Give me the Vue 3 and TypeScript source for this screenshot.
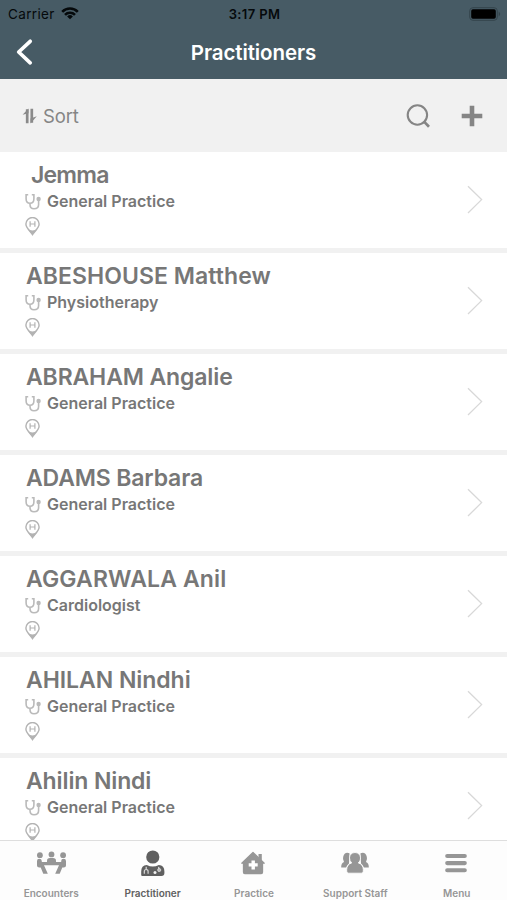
<script setup lang="ts">
interface Practitioner {
  name: string
  specialty: string
  tracking: number
}

const practitioners: Practitioner[] = [
  { name: ' Jemma', specialty: 'General Practice', tracking: -0.8 },
  { name: 'ABESHOUSE Matthew', specialty: 'Physiotherapy', tracking: 0.06 },
  { name: 'ABRAHAM Angalie', specialty: 'General Practice', tracking: -0.13 },
  { name: 'ADAMS Barbara', specialty: 'General Practice', tracking: -0.15 },
  { name: 'AGGARWALA Anil', specialty: 'Cardiologist', tracking: 0.14 },
  { name: 'AHILAN Nindhi', specialty: 'General Practice', tracking: -0.05 },
  { name: 'Ahilin Nindi', specialty: 'General Practice', tracking: -0.12 },
]

const tabs: string[] = ['Encounters', 'Practitioner', 'Practice', 'Support Staff', 'Menu']
const activeTab = 'Practitioner'
</script>

<template>
  <div class="screen">
    <header class="header">
      <div class="status">
        <div class="carrier">
          <span>Carrier</span>
          <svg width="18" height="13" viewBox="0 0 18 13" fill="none" stroke="#05090b" stroke-width="2.6">
            <path d="M1.2 4.8a11 11 0 0 1 15.6 0M4 7.8a7 7 0 0 1 10 0" />
            <path d="M9 12.2 6.1 9.400a4.100 4.100 0 0 1 5.800 0z" fill="#05090b" stroke="none" />
          </svg>
        </div>
        <span class="clock">3:17 PM</span>
        <svg class="battery" width="32" height="14" viewBox="0 0 32 14">
          <rect x="0.7" y="0.7" width="27.6" height="12.6" rx="3.2" fill="none" stroke="#34444c" stroke-width="1" />
          <rect x="2.2" y="2.2" width="24.6" height="9.6" rx="1.7" fill="#000" />
          <path d="M29.7 4.6q3 2.4 0 4.8z" fill="#34444c" />
        </svg>
      </div>
      <div class="nav">
        <svg class="back" width="20" height="30" viewBox="0 0 20 30" fill="none" stroke="#fff" stroke-width="3.7" stroke-linecap="round" stroke-linejoin="round">
          <path d="M15.2 4.3 3.700 15l11.500 10.800" />
        </svg>
        <h1>Practitioners</h1>
        <span class="balance"></span>
      </div>
    </header>

    <div class="toolbar">
      <div class="sort">
        <svg width="16" height="16" viewBox="0 0 16 16" fill="none" stroke="#8a8a8a" stroke-width="2.7">
          <path d="M5.200 15.200V1.200M9.800.8v14" />
          <path d="M6.500.5v4.800L.6 6.700z M8.500 15.500v-5l6.300-2.200z" fill="#8a8a8a" stroke="none" />
        </svg>
        <span>Sort</span>
      </div>
      <div class="tools">
        <svg width="26" height="26" viewBox="0 0 26 26" fill="none" stroke="#858585" stroke-width="2.1">
          <circle cx="12.4" cy="12" r="9.700" />
          <path d="m18.800 18.400 5.200 5.300" stroke-width="2.700" />
        </svg>
        <svg width="22" height="22" viewBox="0 0 22 22" fill="none" stroke="#858585" stroke-width="4.600" stroke-linecap="square">
          <path d="M11 3v16M3 11h16" stroke-linejoin="round" />
        </svg>
      </div>
    </div>

    <main class="list">
      <article v-for="person in practitioners" :key="person.name" class="row">
        <div class="details">
          <h2 :style="{ letterSpacing: person.tracking + 'px' }">{{ person.name }}</h2>
          <div class="specialty">
            <svg width="16" height="17" viewBox="0 0 16 17" fill="none" stroke="#bababa" stroke-width="1.6">
              <path d="M3.200 1.700H1.100v4c0 2.700 1.500 4.600 3.900 4.600s3.900-1.900 3.900-4.600v-4H6.800M5 10.300v1.200c0 2.800 1.600 4.300 4 4.300 2.700 0 4.600-1.600 4.600-4.300V7.200" />
              <circle cx="13.600" cy="6" r="1.400" fill="#bababa" />
            </svg>
            <span>{{ person.specialty }}</span>
          </div>
          <svg class="pin" width="15" height="19" viewBox="0 0 15 19" fill="none" stroke="#b3b3b3" stroke-width="1.4">
            <path d="M2.500 11.500 7.500 18.500l5-7c-3 2.500-7 2.500-10 0z" fill="#b3b3b3" stroke="none" />
            <path d="M7.500 17.500C5.800 14.600.9 11.300.9 7.100a6.600 6.600 0 0 1 13.200 0c0 4.200-4.900 7.500-6.600 10.400z" />
            <path d="M5.100 4.300v5.500M9.900 4.300v5.500M5 7h5" stroke-width="1.200" />
          </svg>
        </div>
        <svg class="chevron" width="16" height="30" viewBox="0 0 16 30" fill="none" stroke="#d8d8d8" stroke-width="1.3">
          <path d="m1 1.200 13.600 13.400L1 28" />
        </svg>
      </article>
    </main>

    <nav class="tabs">
      <div v-for="tab in tabs" :key="tab" class="tab" :class="{ active: tab === activeTab }">
        <svg v-if="tab === 'Encounters'" width="32" height="28" viewBox="0 0 32 28" fill="currentColor">
          <circle cx="4.900" cy="5.200" r="2.900" />
          <circle cx="16.500" cy="4.400" r="2.900" />
          <circle cx="28.100" cy="5.200" r="2.900" />
          <path d="M12 12v-1.200q0-2.800 3-2.800h3q3 0 3 2.800V12z" />
          <path d="M2 11q0-2.300 2.300-2.300T6.800 11v1h19.400v-1q0-2.300 2.400-2.300T31 11v4.500q0 2-2.300 2h-1.400l-2.600 6.200h-4.500l3.800-8.500H9l3.800 8.500H8.300l-2.600-6.200H4.300q-2.300 0-2.300-2z" />
        </svg>
        <svg v-else-if="tab === 'Practitioner'" width="28" height="28" viewBox="0 0 28 28" fill="currentColor">
          <circle cx="14.800" cy="7" r="6.600" />
          <path d="M3.200 25v-3.500q0-6 5.600-6.400 6 3 12 0 5.600.4 5.600 6.400V23q0 3-3 3H4.200q-1 0-1-1z" />
          <path d="M6.300 23.700v-2.200q0-2 1.900-2t1.900 2v2.200M8.200 19.200v-2.500M20.500 16.800l.6 2" fill="none" stroke="#d8d8d8" stroke-width="1.200" />
          <circle cx="21.200" cy="20" r="1.600" fill="#bbb" stroke="#e5e5e5" stroke-width=".7" />
          <circle cx="17" cy="22.500" r="1.500" fill="#f0f0f0" />
        </svg>
        <svg v-else-if="tab === 'Practice'" width="28" height="28" viewBox="0 0 28 28" fill="currentColor">
          <path d="M14 2.500 25.200 13.200H23.500v9q0 1.300-1.300 1.300H5.800q-1.300 0-1.300-1.300v-9H2.800z" stroke="currentColor" stroke-width="1.300" stroke-linejoin="round" />
          <path d="M14.200 10.400v9M9.700 14.900h9" stroke="#fff" stroke-width="3.400" />
          <path d="M19.500 4h3.300v6.500l-3.300-3z" />
        </svg>
        <svg v-else-if="tab === 'Support Staff'" width="30" height="28" viewBox="0 0 30 28" fill="currentColor">
          <path d="M4 12q-1.600-2.500-.8-5.300Q4.500 1.500 9.500 3.200L9 13.500Q7 15 6.200 17.500H1.200V17Q1.200 13 4 12z" />
          <path d="M26 12q1.600-2.500.8-5.300Q25.500 1.500 20.500 3.200L21 13.500q2 1.500 2.800 4h5V17Q28.800 13 26 12z" />
          <path d="M15 2.500c3.500 0 5.500 2.400 5.500 5.400 0 2-.8 3.800-2.200 5 3.400.9 5 3.600 5 6.600v1.700q0 2-2 2H8.700q-2 0-2-2v-1.700c0-3 1.600-5.700 5-6.600a6.600 6.600 0 0 1-2.200-5c0-3 2-5.400 5.500-5.400z" stroke="#fdfdfd" stroke-width=".9" />
        </svg>
        <svg v-else width="24" height="28" viewBox="0 0 24 28" fill="none" stroke="currentColor" stroke-width="4.100" stroke-linecap="round">
          <path d="M3.200 6h17.600M3.200 13.100h17.600M3.200 20.200h17.600" />
        </svg>
        <span>{{ tab }}</span>
      </div>
    </nav>
  </div>
</template>

<style>
body {
  margin: 0;
  overflow: hidden;
}
</style>

<style scoped>
.screen {
  display: flex;
  flex-direction: column;
  height: 900px;
  overflow: hidden;
  background: #fff;
  font-family: Inter, 'Liberation Sans', sans-serif;
}
.header {
  flex: none;
  box-sizing: border-box;
  height: 79px;
  background: #475b65;
}
.status {
  display: grid;
  grid-template-columns: 1fr auto 1fr;
  align-items: center;
  height: 27px;
  padding: 0 6px 0 8px;
  color: #05090b;
  font-size: 13px;
  letter-spacing: 0.35px;
}
.carrier {
  display: flex;
  align-items: center;
  gap: 6px;
  font-size: 13.5px;
}
.clock {
  font-weight: 600;
}
.battery {
  justify-self: end;
}
.nav {
  display: grid;
  grid-template-columns: 1fr auto 1fr;
  align-items: center;
  height: 50px;
  padding: 0 15px;
}
h1 {
  margin: 0;
  color: #fff;
  font-size: 20.5px;
  font-weight: 600;
  letter-spacing: -0.1px;
}
.toolbar {
  display: flex;
  flex: none;
  align-items: center;
  justify-content: space-between;
  height: 73px;
  padding: 0 24px 0 22px;
  background: #f1f1f1;
  color: #858585;
  font-size: 18.5px;
}
.sort {
  display: flex;
  align-items: center;
  gap: 5px;
}
.sort span {
  padding-top: 1px;
  letter-spacing: -0.15px;
}
.tools {
  display: flex;
  align-items: center;
  gap: 30px;
}
.list {
  flex: 1;
  min-height: 0;
  overflow: hidden;
}
.row {
  display: flex;
  justify-content: space-between;
  box-sizing: border-box;
  height: 101px;
  padding: 8px 24px 0 25px;
  border-bottom: 5px solid #f1f1f1;
}
h2 {
  margin: 0;
  padding: 1px 0 0 1px;
  color: #777;
  font-size: 23px;
  font-weight: 600;
  line-height: 28px;
  white-space: pre;
}
.specialty {
  display: flex;
  align-items: center;
  gap: 6px;
  height: 24px;
  color: #777;
  font-size: 16px;
  font-weight: 600;
}
.pin {
  display: block;
  margin-top: 4px;
}
.chevron {
  margin-top: 25px;
}
.tabs {
  display: grid;
  flex: none;
  grid-template-columns: repeat(5, 1fr);
  box-sizing: border-box;
  height: 60px;
  border-top: 1px solid #dedede;
  background: #fdfdfd;
}
.tab {
  display: flex;
  flex-direction: column;
  align-items: center;
  padding-top: 9px;
  color: #969696;
  font-size: 10px;
  font-weight: 600;
}
.tab span {
  margin-top: 9px;
  padding-left: 1px;
  line-height: 13px;
  white-space: nowrap;
}
.tab.active {
  color: #606060;
}
</style>
